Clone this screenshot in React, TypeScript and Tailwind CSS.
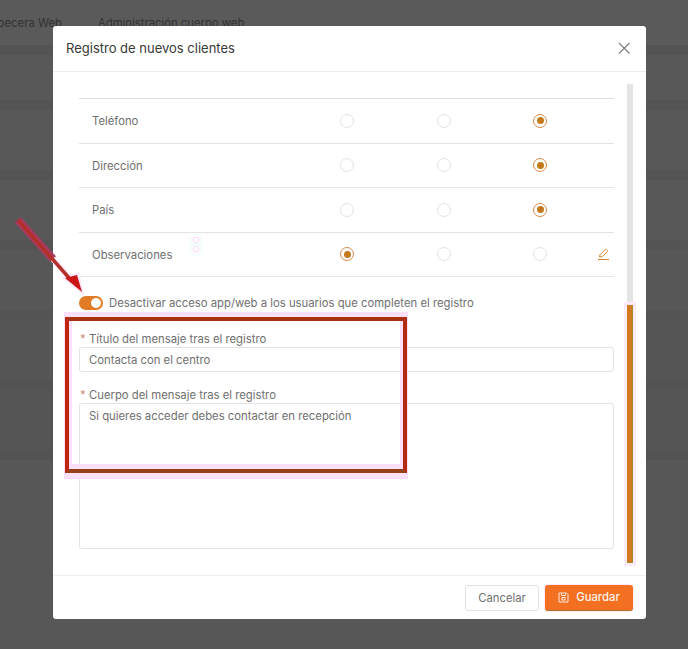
const rows = [
  { label: "Teléfono", selected: 2 },
  { label: "Dirección", selected: 2 },
  { label: "País", selected: 2 },
  { label: "Observaciones", selected: 0, editable: true },
];

function Radio({ checked }: { checked: boolean }) {
  return (
    <span
      className={`flex h-[14px] w-[14px] items-center justify-center rounded-full border bg-white ${
        checked ? "border-[#dd8a4a]" : "border-[#e2e2e2]"
      }`}
    >
      {checked && <span className="h-[7px] w-[7px] rounded-full bg-[#c47a1c]" />}
    </span>
  );
}

function RequiredLabel({ text }: { text: string }) {
  return (
    <div className="flex h-[20px] items-center pl-[1px] text-[11.3px] text-[#6f6f6f]">
      <span className="mr-[5px] w-[4px] text-[#d0907a]">*</span>
      {text}
    </div>
  );
}

export default function App() {
  return (
    <div className="relative h-[649px] w-[688px] overflow-hidden bg-[#575757] font-['Inter',sans-serif]">
      {/* Page behind the overlay */}
      <div className="flex h-[45px] items-center gap-[36px] whitespace-nowrap bg-[#5a5a5a] pt-[1px] text-[11.3px] text-[#333]">
        <span className="-ml-[17px]">Cabecera Web</span>
        <span>Administración cuerpo web</span>
      </div>
      <div className="flex flex-col">
        <div className="h-[65px] border-y-[10px] border-[#545454] bg-[#585858]" />
        <div className="h-[70px] border-b-[10px] border-[#545454] bg-[#585858]" />
        <div className="h-[70px] border-b-[10px] border-[#545454] bg-[#585858]" />
        <div className="h-[70px] border-b-[10px] border-[#545454] bg-[#575757]" />
        <div className="h-[70px] border-b-[10px] border-[#535353] bg-[#565656]" />
        <div className="h-[70px] border-b-[10px] border-[#535353] bg-[#555555]" />
      </div>

      {/* Modal */}
      <div className="absolute left-[53px] top-[26px] flex h-[593px] w-[593px] flex-col rounded-[3px] bg-white">
        <div className="flex h-[46px] shrink-0 items-center justify-between border-b border-[#ececec] pl-[13px] pr-[15px]">
          <span className="text-[13px] text-[#3a3a3a]">Registro de nuevos clientes</span>
          <svg className="-mt-[1px]" width="14" height="14" viewBox="0 0 14 14" fill="none" stroke="#7d7d7d" strokeWidth="1.1">
            <path d="M2 2l10.5 10.5M12.5 2L2 12.5" />
          </svg>
        </div>

        <div className="flex min-h-0 flex-1">
          <div className="ml-[26px] w-[535px] pt-[26px]">
            <div className="border-t border-[#dedede]">
              {rows.map((row) => (
                <div
                  key={row.label}
                  className="flex h-[44.5px] items-center border-b border-[#e4e4e4] text-[11.3px] text-[#6f6f6f]"
                >
                  <span className="ml-[13px] mt-[2px] w-[207px]">{row.label}</span>
                  {[0, 1, 2].map((i) => (
                    <span key={i} className="flex w-[96.5px] justify-center">
                      <Radio checked={row.selected === i} />
                    </span>
                  ))}
                  {row.editable && (
                    <svg className="ml-[8px]" width="13" height="13" viewBox="0 0 13 13" fill="none" stroke="#d9822b" strokeWidth="1">
                      <path d="M2.5 9l.6-2.4L8.2 1.5a.9.9 0 0 1 1.3 0l.9.9a.9.9 0 0 1 0 1.3L5.3 8.6 2.5 9z" />
                      <path d="M1 11.5h11" />
                    </svg>
                  )}
                </div>
              ))}
            </div>

            <div className="mt-[19px] flex h-[14px] items-center">
              <span className="flex h-[14px] w-[24px] items-center justify-end rounded-full bg-[#e27b25] pr-[2px]">
                <span className="h-[10px] w-[10px] rounded-full bg-white" />
              </span>
              <span className="ml-[6px] text-[11.3px] text-[#6f6f6f]">
                Desactivar acceso app/web a los usuarios que completen el registro
              </span>
            </div>

            <div className="mt-[19px]">
              <RequiredLabel text="Título del mensaje tras el registro" />
              <div className="-mt-[2px] flex h-[25px] items-center rounded-[3px] border border-[#e2e2e2] pl-[9px] pt-[1px] text-[11.3px] text-[#6f6f6f]">
                Contacta con el centro
              </div>
            </div>

            <div className="mt-[13px]">
              <RequiredLabel text="Cuerpo del mensaje tras el registro" />
              <div className="-mt-[2px] h-[146px] rounded-[3px] border border-[#e2e2e2] pl-[9px] pt-[4px] text-[11.3px] leading-[17px] text-[#6f6f6f]">
                Si quieres acceder debes contactar en recepción
              </div>
            </div>
          </div>

          <div className="ml-[13px] mt-[12px] flex h-[479px] w-[6px] flex-col bg-[#e4e4e4]">
            <div className="mt-auto h-[258px] border-r border-b border-[#a88a2a] bg-[#d17a1f] shadow-[0_0_0_3px_#fdeafb]" />
          </div>
        </div>

        <div className="flex h-[44px] shrink-0 items-start justify-end gap-[6px] border-t border-[#f0f0f0] pr-[13px] pt-[9px]">
          <button className="h-[26px] w-[74px] rounded-[3px] border border-[#e2e2e2] bg-white text-[11.3px] text-[#707070]">
            Cancelar
          </button>
          <button className="flex h-[26px] w-[88px] items-center justify-center gap-[7px] rounded-[3px] border-b border-[#a8762a] bg-[#f36f21] text-[11.3px] font-medium text-[#fff2e8] shadow-[0_0_0_1px_#fdeafb]">
            <svg width="11" height="11" viewBox="0 0 11 11" fill="none" stroke="#ffe9d9" strokeWidth="1">
              <path d="M1 1h7.5L10 2.5V10H1z" />
              <path d="M3.5 1v2.5h4V1" />
              <rect x="4" y="5.5" width="3" height="2.5" />
            </svg>
            Guardar
          </button>
        </div>
      </div>

      {/* Annotations drawn on top of the screenshot */}
      <div className="absolute left-[64px] top-[312px] h-[167px] w-[344px] border-x border-t-[5px] border-b-[6px] border-[#fde0fb]" />
      <div className="absolute left-[65px] top-[317px] h-[156px] w-[342px] border-4 border-t-[#a8320f] border-r-[#b32b10] border-b-[#95401a] border-l-[#c02510]">
        <div className="h-full border-x-[3px] border-b-[5px] border-[#fde0fb]" />
      </div>
      <svg className="absolute left-0 top-0" width="688" height="649" viewBox="0 0 688 649" fill="none">
        <path d="M18 220L53 259" stroke="#a83a60" strokeWidth="8" />
        <path d="M53 259L70 278" stroke="#fdeafb" strokeWidth="6" />
        <path d="M82 292L64 278L78 274Z" fill="#fdeafb" stroke="#fdeafb" strokeWidth="3" />
        <path d="M18 220L70 279" stroke="#b3302a" strokeWidth="3.5" />
        <path d="M82 292L65 278L77 275Z" fill="#cc1616" />
        <circle cx="196" cy="240" r="3" stroke="#fbd8f8" />
        <circle cx="196" cy="249" r="3" stroke="#fbd8f8" />
        <circle cx="196" cy="240" r="6" stroke="#e6fafc" />
        <circle cx="196" cy="249" r="6" stroke="#e6fafc" />
      </svg>
    </div>
  );
}
